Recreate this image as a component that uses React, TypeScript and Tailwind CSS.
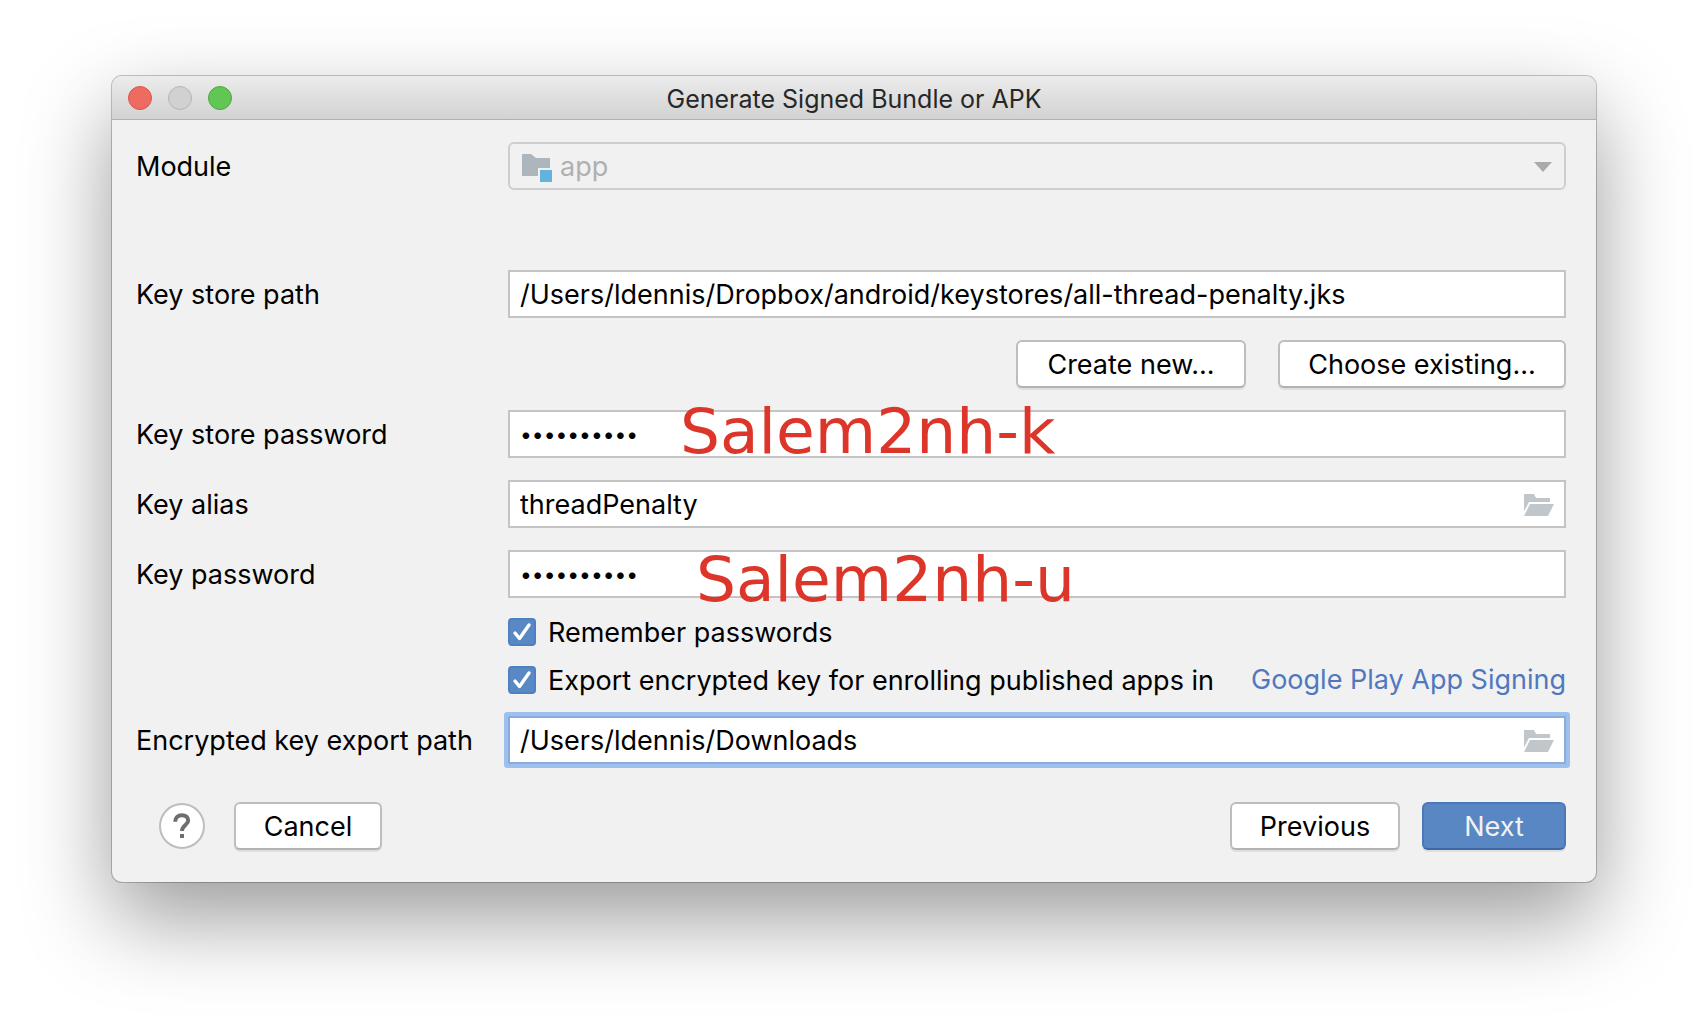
import React, { useState } from "react";

const fieldShape = "block h-12 w-full border-2 bg-white px-[10px] leading-8 text-black outline-none";
const plainField = fieldShape + " border-[#c4c4c4] text-[27px]";
const focusedField = fieldShape + " rounded-[1px] border-[#8bacd8] text-[27px] ring-4 ring-[#9dc1ee]";
const passwordField = fieldShape + " border-[#c4c4c4] text-[21px]";

const noteText =
  "pointer-events-none absolute font-['DejaVu_Sans',sans-serif] text-[63px] leading-[72px] whitespace-nowrap text-[#dc3529]";

const buttonBase =
  "h-12 rounded-md border-2 pt-0.5 text-[27px] leading-8 shadow-[0_2px_0_rgba(0,0,0,0.08)]";
const lightButton = "border-[#bdbdbd] border-b-[#b2b2b2] bg-white text-black";

function ModuleIcon() {
  return (
    <svg width="30" height="28" viewBox="0 0 30 28" aria-hidden="true">
      <path d="M0 0H9L14 4H28V14H16V22H0Z" fill="#adb5bd" />
      <rect x="18" y="16" width="12" height="12" fill="#62b4dd" />
    </svg>
  );
}

function OpenFolderIcon() {
  return (
    <svg width="30" height="22" viewBox="0 0 30 22" aria-hidden="true">
      <path d="M0 0H10L12 4H26V8H5L0 17.5Z" fill="#c0c6c9" />
      <path d="M6 10H30L24 22H0Z" fill="#c0c6c9" />
    </svg>
  );
}

function FormLabel({ htmlFor, children }: { htmlFor: string; children: React.ReactNode }) {
  return (
    <label htmlFor={htmlFor} className="pt-0.5 leading-8 whitespace-nowrap">
      {children}
    </label>
  );
}

function CheckOption({ id, children }: { id: string; children: React.ReactNode }) {
  const [checked, setChecked] = useState(true);
  return (
    <div className="flex h-7 items-center gap-3 whitespace-nowrap">
      <span className="grid shrink-0">
        <input
          id={id}
          type="checkbox"
          checked={checked}
          onChange={(e) => setChecked(e.target.checked)}
          className="col-start-1 row-start-1 h-7 w-7 appearance-none rounded border-2 border-[#b0b0b0] bg-white checked:border-[#4c80c3] checked:bg-[#5a88c4]"
        />
        {checked && (
          <svg
            className="pointer-events-none col-start-1 row-start-1"
            width="28"
            height="28"
            viewBox="0 0 28 28"
            aria-hidden="true"
          >
            <path
              d="M7 15L11.5 20.5L21 7"
              fill="none"
              stroke="#fff"
              strokeWidth="3.4"
              strokeLinecap="round"
              strokeLinejoin="round"
            />
          </svg>
        )}
      </span>
      <label htmlFor={id} className="pt-0.5 leading-8">
        {children}
      </label>
    </div>
  );
}

function FolderField({ id, value, focused }: { id: string; value: string; focused?: boolean }) {
  return (
    <div className="relative">
      <input id={id} type="text" defaultValue={value} className={focused ? focusedField : plainField} />
      <button
        type="button"
        aria-label="Browse"
        className="absolute inset-y-0 right-3 flex items-center pt-0.5"
      >
        <OpenFolderIcon />
      </button>
    </div>
  );
}

export default function App() {
  return (
    <div className="min-h-screen overflow-hidden bg-white px-28 pt-[76px] pb-[148px] font-['Inter',sans-serif] text-[27px] text-black">
      <main className="rounded-[10px] bg-[#f1f1f1] shadow-[0_0_0_1px_rgba(0,0,0,0.22),0_36px_88px_rgba(0,0,0,0.4)]">
        <header className="grid h-11 grid-cols-[1fr_auto_1fr] items-center rounded-t-[10px] border-b border-[#b0b0b0] bg-linear-to-b from-[#ececec] to-[#d2d2d2] px-4">
          <div className="flex gap-4">
            <button type="button" aria-label="Close" className="h-6 w-6 rounded-full border border-[#d9564c] bg-[#ed6b60]" />
            <button type="button" aria-label="Minimize" disabled className="h-6 w-6 rounded-full border border-[#b5b5b5] bg-[#d1d1d1]" />
            <button type="button" aria-label="Zoom" className="h-6 w-6 rounded-full border border-[#50a840] bg-[#62c655]" />
          </div>
          <h1 className="pt-0.5 text-[25px] leading-8 text-[#272727]">Generate Signed Bundle or APK</h1>
        </header>

        <form className="pt-[22px] pr-[30px] pb-8 pl-6" onSubmit={(e) => e.preventDefault()}>
          <div className="grid grid-cols-[372px_1fr] items-center gap-y-[22px]">
            <FormLabel htmlFor="module">Module</FormLabel>
            <div className="relative">
              <select
                id="module"
                disabled
                className="block h-12 w-full appearance-none rounded-md border-2 border-[#cecece] bg-[#f1f1f1] pt-0.5 pl-[50px] text-[27px] leading-8 text-[#b0b0b0] opacity-100"
              >
                <option>app</option>
              </select>
              <span className="pointer-events-none absolute top-3 left-[14px]">
                <ModuleIcon />
              </span>
              <svg
                className="pointer-events-none absolute top-5 right-[14px]"
                width="18"
                height="10"
                viewBox="0 0 18 10"
                aria-hidden="true"
              >
                <path d="M0 0H18L9 10Z" fill="#aaa" />
              </svg>
            </div>

            <div className="col-span-2 h-9" />

            <FormLabel htmlFor="store-path">Key store path</FormLabel>
            <input
              id="store-path"
              type="text"
              defaultValue="/Users/ldennis/Dropbox/android/keystores/all-thread-penalty.jks"
              className={plainField}
            />

            <div className="col-start-2 flex justify-end gap-8">
              <button type="button" className={`${buttonBase} ${lightButton} w-[230px]`}>
                Create new...
              </button>
              <button type="button" className={`${buttonBase} ${lightButton} w-72`}>
                Choose existing...
              </button>
            </div>

            <FormLabel htmlFor="store-password">Key store password</FormLabel>
            <div className="relative">
              <input id="store-password" type="password" defaultValue="0123456789" className={passwordField} />
              <span className={`${noteText} top-[-14px] left-[172px]`}>Salem2nh-k</span>
            </div>

            <FormLabel htmlFor="alias">Key alias</FormLabel>
            <FolderField id="alias" value="threadPenalty" />

            <FormLabel htmlFor="key-password">Key password</FormLabel>
            <div className="relative">
              <input id="key-password" type="password" defaultValue="0123456789" className={passwordField} />
              <span className={`${noteText} top-[-6px] left-[188px]`}>Salem2nh-u</span>
            </div>

            <div className="col-start-2 -mt-0.5 flex flex-col gap-5">
              <CheckOption id="remember">Remember passwords</CheckOption>
              <div className="flex items-center justify-between">
                <CheckOption id="export">Export encrypted key for enrolling published apps in</CheckOption>
                <a href="#play-signing" className="leading-7 whitespace-nowrap text-[#5078bf]">
                  Google Play App Signing
                </a>
              </div>
            </div>

            <FormLabel htmlFor="export-path">Encrypted key export path</FormLabel>
            <FolderField id="export-path" value="/Users/ldennis/Downloads" focused />
          </div>

          <footer className="mt-[38px] flex items-center pl-[23px]">
            <button
              type="button"
              aria-label="Help"
              className="flex h-[46px] w-[46px] items-center justify-center rounded-full border-2 border-[#bdbdbd] bg-white"
            >
              <svg width="18" height="26" viewBox="0 0 18 26" aria-hidden="true">
                <path d="M2.2 8.8C2.2 4.4 5 2.2 8.8 2.2C12.6 2.2 15.2 4.2 15.2 7.6C15.2 12 9 12.2 9 18" fill="none" stroke="#6e6e6e" strokeWidth="4" />
                <rect x="7" y="21" width="4" height="4" fill="#6e6e6e" />
              </svg>
            </button>
            <button type="button" className={`${buttonBase} ${lightButton} ml-[29px] w-[148px]`}>
              Cancel
            </button>
            <button type="button" className={`${buttonBase} ${lightButton} ml-auto w-[170px]`}>
              Previous
            </button>
            <button
              type="submit"
              className={`${buttonBase} ml-[22px] w-36 border-[#4a78b8] border-b-[#3d68a8] bg-[#5987c3] text-[#f1f1f1]`}
            >
              Next
            </button>
          </footer>
        </form>
      </main>
    </div>
  );
}
